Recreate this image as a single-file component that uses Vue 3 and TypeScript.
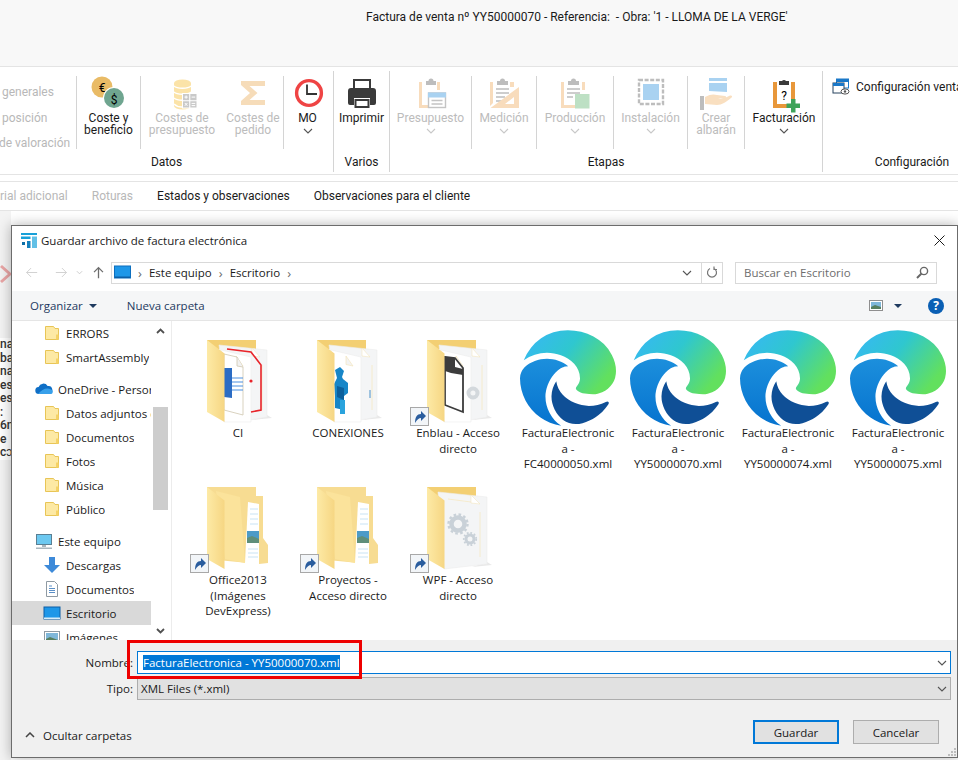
<script setup lang="ts">
interface Tool {
  icon: string;
  lines: string[];
  width: number;
  disabled?: boolean;
  menu?: boolean;
  sep?: boolean;
}

interface TreeRow {
  icon: string;
  label: string;
  indent?: boolean;
  gap?: boolean;
  selected?: boolean;
}

interface FileItem {
  icon: string;
  lines: string[];
  shortcut?: boolean;
}

const datosTools: Tool[] = [
  { icon: "i-coste", lines: ["Coste y", "beneficio"], width: 64, sep: true },
  { icon: "i-coins", lines: ["Costes de", "presupuesto"], width: 82, disabled: true },
  { icon: "i-sigma", lines: ["Costes de", "pedido"], width: 61, disabled: true, sep: true },
  { icon: "i-clock", lines: ["MO"], width: 47, menu: true },
];

const etapasTools: Tool[] = [
  { icon: "i-presupuesto", lines: ["Presupuesto"], width: 82, disabled: true, menu: true, sep: true },
  { icon: "i-medicion", lines: ["Medición"], width: 65, disabled: true, menu: true, sep: true },
  { icon: "i-produccion", lines: ["Producción"], width: 77, disabled: true, menu: true, sep: true },
  { icon: "i-instalacion", lines: ["Instalación"], width: 74, disabled: true, menu: true, sep: true },
  { icon: "i-albaran", lines: ["Crear", "albarán"], width: 57, disabled: true, sep: true },
  { icon: "i-facturacion", lines: ["Facturación"], width: 78, menu: true },
];

const tree: TreeRow[] = [
  { icon: "t-folder", label: "ERRORS", indent: true },
  { icon: "t-folder", label: "SmartAssembly", indent: true },
  { icon: "t-cloud", label: "OneDrive - Personal", gap: true },
  { icon: "t-folder", label: "Datos adjuntos de correo", indent: true },
  { icon: "t-folder", label: "Documentos", indent: true },
  { icon: "t-folder", label: "Fotos", indent: true },
  { icon: "t-folder", label: "Música", indent: true },
  { icon: "t-folder", label: "Público", indent: true },
  { icon: "t-pc", label: "Este equipo", gap: true },
  { icon: "t-down", label: "Descargas", indent: true },
  { icon: "t-doc", label: "Documentos", indent: true },
  { icon: "t-desktop", label: "Escritorio", indent: true, selected: true },
  { icon: "t-image", label: "Imágenes", indent: true },
];

const files: FileItem[] = [
  { icon: "f-ci", lines: ["CI"] },
  { icon: "f-con", lines: ["CONEXIONES"] },
  { icon: "f-enb", lines: ["Enblau - Acceso", "directo"], shortcut: true },
  { icon: "edge", lines: ["FacturaElectronic", "a -", "FC40000050.xml"] },
  { icon: "edge", lines: ["FacturaElectronic", "a -", "YY50000070.xml"] },
  { icon: "edge", lines: ["FacturaElectronic", "a -", "YY50000074.xml"] },
  { icon: "edge", lines: ["FacturaElectronic", "a -", "YY50000075.xml"] },
  { icon: "f-open", lines: ["Office2013", "(Imágenes", "DevExpress)"], shortcut: true },
  { icon: "f-open", lines: ["Proyectos -", "Acceso directo"], shortcut: true },
  { icon: "f-wpf", lines: ["WPF - Acceso", "directo"], shortcut: true },
];

const behindLines = ["na", "ba", "na", "es", "es:", ":", "6n", "e", "cɔ"];
</script>

<template>
  <div class="page">
    <svg class="sprite" aria-hidden="true">
      <defs>
        <linearGradient id="flap" x1="0" y1="0" x2="1" y2="0">
          <stop offset="0" stop-color="#fdeaa6" />
          <stop offset="1" stop-color="#f6d683" />
        </linearGradient>
        <linearGradient id="edgeTop" x1="0" y1="0" x2="1" y2="0.55">
          <stop offset="0" stop-color="#38b6f8" />
          <stop offset="0.5" stop-color="#2fc7cf" />
          <stop offset="1" stop-color="#62e05e" />
        </linearGradient>
        <linearGradient id="edgeMid" x1="0" y1="0" x2="0" y2="1">
          <stop offset="0" stop-color="#1c8fdc" />
          <stop offset="1" stop-color="#0673cf" />
        </linearGradient>

        <!-- ribbon icons, 40x40 -->
        <symbol id="i-coste" viewBox="0 0 40 40">
          <circle cx="13" cy="14" r="10.5" fill="#e9bb66" />
          <text x="13" y="19" class="svg-sign" text-anchor="middle">€</text>
          <circle cx="25" cy="25" r="11" fill="#fff" />
          <circle cx="25" cy="25" r="10" fill="#6fa590" />
          <text x="25" y="30.5" class="svg-sign svg-sign--big" text-anchor="middle">$</text>
        </symbol>
        <symbol id="i-coins" viewBox="0 0 40 40">
          <path d="M12 10a8.5 3.5 0 0 1 17 0v23a8.5 3.5 0 0 1-17 0z" fill="#fbe3a8" />
          <path d="M12 13c3 3 14 3 17 0M12 19c3 3 14 3 17 0M12 25c3 3 14 3 17 0M12 31c2 2 6 3 8 3" fill="none" stroke="#fff" stroke-width="1.4" />
          <rect x="20" y="20" width="15.5" height="15.5" fill="#fff" />
          <path d="M21 21h6.2v6.2H21zM28.3 21h6.2v6.2h-6.2zM21 28.3h6.2v6.2H21zM28.3 28.3h6.2v6.2h-6.2z" fill="#c9c9c9" />
          <path d="M24.1 22.5v3.2M22.5 24.1h3.2M29.6 24.1h3.6M22.8 30l2.6 2.8M25.4 30l-2.6 2.8M29.6 30.4h3.6M29.6 32.6h3.6" stroke="#fff" stroke-width="1" />
        </symbol>
        <symbol id="i-sigma" viewBox="0 0 40 40">
          <path d="M8 8h24v5H16.5l8 7-8 7H32v5H8v-4l9-8-9-8z" fill="#f6dcb9" />
        </symbol>
        <symbol id="i-clock" viewBox="0 0 40 40">
          <circle cx="21" cy="20" r="12.4" fill="#fff" stroke="#ef4444" stroke-width="3.4" />
          <path d="M19 11.5V21h10" fill="none" stroke="#333" stroke-width="1.8" />
        </symbol>
        <symbol id="i-print" viewBox="0 0 40 40">
          <path d="M12 15V7h16v8" fill="none" stroke="#3a3a3a" stroke-width="2" />
          <path d="M9 15h22a3 3 0 0 1 3 3v12a2 2 0 0 1-2 2h-4v-7H12v7H8a2 2 0 0 1-2-2V18a3 3 0 0 1 3-3z" fill="#3a3a3a" />
          <path d="M13.5 27h13v7h-13z" fill="none" stroke="#3a3a3a" stroke-width="2" />
        </symbol>
        <symbol id="i-presupuesto" viewBox="0 0 40 40">
          <path d="M8 9h3v26h14v-3H11M26 9h3v8h-3z" fill="#f8dcbc" />
          <path d="M8 9h3v26H8z" fill="#f8dcbc" />
          <path d="M15 8h2.5a2.5 2.5 0 0 1 5 0H25v4H15z" fill="#bdbdbd" />
          <rect x="17.5" y="20" width="17" height="14.5" fill="#fff" stroke="#c4c4c4" stroke-width="1.4" />
          <rect x="17" y="19.5" width="18" height="5" fill="#a9d2f1" />
          <path d="M20.5 27.5h11M20.5 31h11" stroke="#c4c4c4" stroke-width="1.4" />
        </symbol>
        <symbol id="i-medicion" viewBox="0 0 40 40">
          <path d="M6 9h3v21l-3 3zM26 9h4v5h-4z" fill="#f8dcbc" />
          <path d="M13 8h3a2.5 2.5 0 0 1 5 0h3v4H13z" fill="#bdbdbd" />
          <path d="M12 16h13M12 20h13M12 24h9M12 28h6" stroke="#bdbdbd" stroke-width="1.6" />
          <path d="M35 14v21H6.5zM30 24l-9 7h9z" fill="#f8dcbc" fill-rule="evenodd" />
        </symbol>
        <symbol id="i-produccion" viewBox="0 0 40 40">
          <path d="M6 9h3v26h11v-3H9M27 9h3v8h-3z" fill="#f8dcbc" />
          <path d="M6 9h3v26H6z" fill="#f8dcbc" />
          <path d="M13 8h3a2.5 2.5 0 0 1 5 0h3v4H13z" fill="#bdbdbd" />
          <path d="M12 16h13M12 20h13M12 24h6" stroke="#bdbdbd" stroke-width="1.6" />
          <rect x="20" y="21" width="14.5" height="14.5" fill="#bde0c4" />
        </symbol>
        <symbol id="i-instalacion" viewBox="0 0 40 40">
          <rect x="8" y="7" width="24" height="24" fill="none" stroke="#bdbdbd" stroke-width="2.4" stroke-dasharray="4 1.6" />
          <rect x="12" y="11" width="16" height="16" fill="#a9d2f1" />
        </symbol>
        <symbol id="i-albaran" viewBox="0 0 40 40">
          <path d="M13 5h18v3H13zM13 10h18v9l-18-1z" fill="#a9d2f1" />
          <path d="M4 23h4v14H4z" fill="#bdbdbd" />
          <path d="M9 24c5-3 9-3 12-2l8 1c2 .5 1 2.500-1 2.500h-6c3 1 6 0 12-3 2-.5 3 1 1 2.500-5 4-9 7-14 7-4 0-8-1-12-1z" fill="#f9dfc0" />
        </symbol>
        <symbol id="i-facturacion" viewBox="0 0 40 40">
          <path d="M9 9h4v22h13v4H9zM27 9h4v18h-4z" fill="#e8973a" />
          <path d="M15 8h3a2.500 2.500 0 0 1 4 0h3v4H15z" fill="#3a3a3a" />
          <text x="20" y="27" class="svg-q" text-anchor="middle">?</text>
          <path d="M27 26h4.500v4.500H36V35h-4.500v4.500H27V35h-4.500v-4.500H27z" fill="#3fa35a" />
        </symbol>

        <!-- big folder parts, 96x96 -->
        <symbol id="folder-back" viewBox="0 0 96 96">
          <path d="M17 10h49v9H17z" fill="#f3cf73" />
          <path d="M62 90l20-2-5-3z" fill="#e9e9e9" />
        </symbol>
        <symbol id="folder-flap" viewBox="0 0 96 96">
          <path d="M17 10l17.500 13.500V92L17 82z" fill="url(#flap)" />
        </symbol>
        <symbol id="pages" viewBox="0 0 96 96">
          <path d="M29 15l48 5v67l-17 3-21-8z" fill="#f4f5f6" stroke="#ececec" stroke-width=".6" />
          <path d="M62 18l8 9-8-1z" fill="#fff" stroke="#f3e3b5" stroke-width=".5" />
          <path d="M72 35v45" stroke="#f6e9c4" stroke-width=".8" />
          <path d="M31 20l30 7v65H34z" fill="#fff" stroke="#ececec" stroke-width=".6" />
          <path d="M46 26l7 10-7-1.500z" fill="#f3f3f3" stroke="#f3e3b5" stroke-width=".6" />
        </symbol>

        <symbol id="f-ci" viewBox="0 0 96 96">
          <use href="#folder-back" width="96" height="96" />
          <use href="#pages" width="96" height="96" />
          <path d="M37 19l24 3 10 13v45l-10 2" fill="none" stroke="#e8242a" stroke-width="1.600" />
          <circle cx="61" cy="51" r="1.600" fill="#e8242a" />
          <path d="M34 24l13 3 6 10v48l-19-5z" fill="#fff" stroke="#cfc6ae" stroke-width=".8" />
          <path d="M47 27v9l6 1" fill="#f1f1f1" stroke="#cfc6ae" stroke-width=".8" />
          <path d="M34 38h8v30l-8-1z" fill="#2b6cc4" />
          <path d="M42 48h11M42 52h11M42 56h11M42 60h11" stroke="#4a90e2" stroke-width="1.200" />
          <use href="#folder-flap" width="96" height="96" />
        </symbol>
        <symbol id="f-con" viewBox="0 0 96 96">
          <use href="#folder-back" width="96" height="96" />
          <use href="#pages" width="96" height="96" />
          <path d="M70 60v8" stroke="#4a90c8" stroke-width="1" />
          <path d="M35 40l5-3 4 4-2 6 1 2 5 4v10l-4 3v14l-9-2V66l-1-12 3-6z" fill="#1786c8" />
          <path d="M37 56l7 2v12l-7-3z" fill="#0b5f9c" />
          <path d="M40 70h5v14h-5z" fill="#2aa3dd" />
          <use href="#folder-flap" width="96" height="96" />
        </symbol>
        <symbol id="f-enb" viewBox="0 0 96 96">
          <use href="#folder-back" width="96" height="96" />
          <use href="#pages" width="96" height="96" />
          <path d="M35 27l10 1 8 10v44l-18-7z" fill="#fff" stroke="#3c3c3c" stroke-width="1.800" />
          <path d="M35 27l10 1v9l8 2v6l-12-2-6-2z" fill="#3c3c3c" />
          <circle cx="63" cy="63" r="4.500" fill="none" stroke="#d3d8dc" stroke-width="4" />
          <use href="#folder-flap" width="96" height="96" />
        </symbol>
        <symbol id="f-open" viewBox="0 0 96 96">
          <path d="M17 10h49v9l7 0v42l5 7v18l-9 1-52-5z" fill="#f7dc92" />
          <path d="M58 25l11 2v62l-14-3z" fill="#fff" />
          <path d="M60 32h8M60 37h8M60 42h8M60 47h8M58 72h10M58 76h10M58 80h10" stroke="#bcdcf0" stroke-width=".8" />
          <path d="M57 54h12v12H57z" fill="#4c9bc8" />
          <path d="M57 61l5-2 7 3v4H57z" fill="#5f8f7a" />
          <path d="M26 14l24 6 5 66-20-4z" fill="#fbe39b" />
          <use href="#folder-flap" width="96" height="96" />
        </symbol>
        <symbol id="f-wpf" viewBox="0 0 96 96">
          <use href="#folder-back" width="96" height="96" />
          <path d="M28 15l49 5v67l-43 5z" fill="#f4f5f6" stroke="#ececec" stroke-width=".6" />
          <path d="M61 18l9 9-9-1z" fill="#fff" stroke="#f3e3b5" stroke-width=".5" />
          <path d="M38 22l23 3M70 35v45" stroke="#f6e9c4" stroke-width=".8" />
          <circle cx="48" cy="47" r="6.500" fill="none" stroke="#c9d1d8" stroke-width="4.500" />
          <circle cx="48" cy="47" r="9.500" fill="none" stroke="#c9d1d8" stroke-width="2.400" stroke-dasharray="2.600 2.400" />
          <circle cx="60" cy="62" r="4" fill="none" stroke="#c9d1d8" stroke-width="3" />
          <circle cx="60" cy="62" r="6.200" fill="none" stroke="#c9d1d8" stroke-width="1.800" stroke-dasharray="1.800 1.800" />
          <use href="#folder-flap" width="96" height="96" />
        </symbol>

        <symbol id="edge" viewBox="0 0 24 24">
          <path d="M6.360 16.590q0 1.100.27 2.150.27 1.060.78 2.030.51.960 1.240 1.770.74.820 1.660 1.400-1.470-.2-2.800-.74-1.330-.55-2.480-1.370-1.150-.83-2.080-1.900-.92-1.070-1.580-2.330T.36 14.940Q0 13.540 0 12.060q0-.81.32-1.490.31-.68.83-1.230.53-.55 1.200-.96.66-.4 1.350-.66.74-.27 1.500-.39.78-.12 1.550-.12.7 0 1.420.1.72.12 1.400.35.680.23 1.320.57.630.35 1.160.83-.35 0-.7.07-.33.07-.65.23v-.02q-.63.280-1.200.74-.57.460-1.050 1.040-.48.580-.87 1.260-.38.670-.65 1.390-.27.710-.42 1.440-.15.720-.15 1.380z" fill="url(#edgeMid)" />
          <path d="M21.860 17.860q.14 0 .25.120.1.130.1.250t-.11.330l-.32.460-.43.530-.44.5q-.21.25-.38.42l-.22.23q-.58.53-1.340 1.040-.76.510-1.600.91-.86.4-1.740.64t-1.670.24q-.9 0-1.690-.28-.8-.28-1.480-.78-.68-.5-1.220-1.170-.53-.66-.92-1.440-.38-.77-.58-1.600-.2-.83-.2-1.670 0-1 .32-1.960.33-.97.87-1.800.14.950.55 1.770.41.820 1.020 1.500.6.680 1.380 1.210.78.540 1.640.9.860.36 1.770.56.920.2 1.800.2 1.120 0 2.180-.24 1.060-.23 2.060-.72l.2-.1.2-.05z" fill="#0f4f96" />
          <path d="M11.960.06q1.700 0 3.330.39 1.630.38 3.070 1.150 1.430.77 2.620 1.930 1.180 1.160 1.980 2.700.49.940.76 1.960.28 1 .28 2.080 0 .89-.23 1.700-.24.8-.69 1.480-.45.68-1.100 1.220-.64.53-1.450.88-.54.24-1.110.36-.58.13-1.160.13-.42 0-.97-.03-.54-.03-1.100-.12-.55-.09-1.050-.28-.5-.19-.84-.5-.12-.09-.23-.24-.1-.16-.1-.33 0-.15.16-.35.16-.2.35-.5.2-.28.36-.68.16-.4.16-.95 0-1.060-.4-1.960-.4-.91-1.060-1.640-.66-.74-1.520-1.280-.86-.55-1.790-.89-.84-.3-1.720-.44-.87-.14-1.760-.14-1.550 0-3.060.45T.94 7.550q.71-1.740 1.810-3.130 1.100-1.380 2.520-2.350Q6.680 1.100 8.370.58q1.700-.52 3.580-.52Z" fill="url(#edgeTop)" />
        </symbol>

        <!-- navigation tree icons, 18x18 -->
        <symbol id="t-folder" viewBox="0 0 18 18">
          <path d="M2.500 2.500h8l1.500 2h3.500v11H2.500z" fill="#fde9a4" stroke="#e8c556" />
          <path d="M13 10.500h2.500v5H13z" fill="#f5d266" />
        </symbol>
        <symbol id="t-cloud" viewBox="0 0 18 18">
          <path d="M4 14a3.500 3.500 0 0 1-.4-7A5 5 0 0 1 12.600 6a3.800 3.800 0 0 1 1.400 8z" fill="#0f6fc6" />
          <path d="M3 14h12a2.300 2.300 0 0 0 1-4.500C12 7 7 9 3 14z" fill="#38a0ea" />
        </symbol>
        <symbol id="t-pc" viewBox="0 0 18 18">
          <rect x="1.500" y="2.500" width="15" height="10" fill="#6cc8f0" stroke="#5a7f93" />
          <path d="M7 13h4v2H7zM1 15.500h16V17H1z" fill="#a9b6bd" />
        </symbol>
        <symbol id="t-down" viewBox="0 0 18 18">
          <path d="M6 1h6v8h5l-8 8-8-8h5z" fill="#3d8ad9" />
        </symbol>
        <symbol id="t-doc" viewBox="0 0 18 18">
          <path d="M3.500 1.500h8l3 3v12h-11z" fill="#fff" stroke="#8f9aa3" />
          <path d="M6 6h3M6 8.500h6M6 10.500h6M6 12.500h6" stroke="#5b8fc7" />
        </symbol>
        <symbol id="t-desktop" viewBox="0 0 18 18">
          <rect x="1" y="3" width="16" height="12" fill="#1e97e8" stroke="#0d5fa6" />
          <path d="M1 13.500h16V15H1z" fill="#d8edf9" />
        </symbol>
        <symbol id="t-image" viewBox="0 0 18 18">
          <rect x="1.500" y="3.500" width="15" height="12" fill="#fff" stroke="#8f9aa3" />
          <path d="M3 5h12v8H3z" fill="#7fb7d9" />
          <path d="M3 11l4-2 8 3v1H3z" fill="#577f5f" />
        </symbol>
      </defs>
    </svg>

    <header class="top-bar">Factura de venta nº YY50000070 - Referencia:&nbsp; - Obra: '1 - LLOMA DE LA VERGE'</header>

    <section class="ribbon">
      <div class="group group--datos">
        <div class="group-row">
          <ul class="mini-list">
            <li>generales</li>
            <li>posición</li>
            <li class="mini-list__cut">de valoración</li>
          </ul>
          <div
            v-for="tool in datosTools"
            :key="tool.icon"
            class="tool"
            :class="{ 'tool--off': tool.disabled, 'tool--sep': tool.sep }"
            :style="{ width: tool.width + 'px' }"
          >
            <svg class="tool-icon"><use :href="'#' + tool.icon" width="40" height="40" /></svg>
            <span v-for="line in tool.lines" :key="line" class="tool-line">{{ line }}</span>
            <svg v-if="tool.menu" class="chevron" viewBox="0 0 10 6"><path d="M1 1l4 4 4-4" /></svg>
          </div>
        </div>
        <div class="group-name">Datos</div>
      </div>

      <div class="group group--varios">
        <div class="group-row">
          <div class="tool tool--print">
            <svg class="tool-icon"><use href="#i-print" width="40" height="40" /></svg>
            <span class="tool-line">Imprimir</span>
          </div>
        </div>
        <div class="group-name">Varios</div>
      </div>

      <div class="group group--etapas">
        <div class="group-row">
          <div
            v-for="tool in etapasTools"
            :key="tool.icon"
            class="tool"
            :class="{ 'tool--off': tool.disabled, 'tool--sep': tool.sep }"
            :style="{ width: tool.width + 'px' }"
          >
            <svg class="tool-icon"><use :href="'#' + tool.icon" width="40" height="40" /></svg>
            <span v-for="line in tool.lines" :key="line" class="tool-line">{{ line }}</span>
            <svg v-if="tool.menu" class="chevron" viewBox="0 0 10 6"><path d="M1 1l4 4 4-4" /></svg>
          </div>
        </div>
        <div class="group-name">Etapas</div>
      </div>

      <div class="group group--config">
        <div class="group-row">
          <div class="config-link">
            <svg width="18" height="18" viewBox="0 0 18 18">
              <rect x="4.500" y="1" width="12" height="9" fill="#fff" stroke="#1a78c8" />
              <path d="M4.500 1h12v3h-12z" fill="#1a78c8" />
              <rect x="1" y="5" width="11" height="10" fill="#fff" stroke="#27435f" />
              <path d="M1 5h11v3H1z" fill="#1a78c8" />
              <ellipse cx="13" cy="13.500" rx="4" ry="2.600" fill="#fff" stroke="#555" />
              <circle cx="13" cy="13.500" r="1.200" fill="#555" />
            </svg>
            <span>Configuración ventas</span>
          </div>
        </div>
        <div class="group-name">Configuración</div>
      </div>
    </section>

    <nav class="tabs">
      <span class="tab tab--off">rial adicional</span>
      <span class="tab tab--off">Roturas</span>
      <span class="tab">Estados y observaciones</span>
      <span class="tab">Observaciones para el cliente</span>
    </nav>

    <div class="behind">
      <svg class="behind-x" width="12" height="20" viewBox="0 0 12 20"><path d="M1 2l9 8-9 8" fill="none" stroke="#e9a5a5" stroke-width="3" /></svg>
      <div class="behind-text">
        <div v-for="(line, i) in behindLines" :key="i">{{ line }}</div>
      </div>
    </div>

    <div class="dialog">
      <div class="title-bar">
        <svg width="18" height="18" viewBox="0 0 18 18">
          <path d="M1 2h16v2H1z" fill="#17a0d8" />
          <path d="M12 5.500h5V17h-5z" fill="#62c0e6" />
          <path d="M1 5.500h9.500V8H1z" fill="#17a0d8" />
          <path d="M7 10h3.500v7H7z" fill="#1580bd" />
          <path d="M2 11h3v3H2z" fill="#0d6fa8" />
        </svg>
        <span class="title-text">Guardar archivo de factura electrónica</span>
        <svg class="close" width="11" height="11" viewBox="0 0 11 11"><path d="M.5.5l10 10M10.500.5l-10 10" stroke="#1a1a1a" /></svg>
      </div>

      <div class="nav-row">
        <svg class="nav-arrow" viewBox="0 0 16 14"><path d="M15 7H2M7.500 1.500L2 7l5.500 5.500" stroke="#c7c7c7" /></svg>
        <svg class="nav-arrow nav-arrow--fwd" viewBox="0 0 16 14"><path d="M1 7h13M8.500 1.500L14 7l-5.500 5.500" stroke="#c7c7c7" /></svg>
        <svg class="nav-drop" viewBox="0 0 8 5"><path d="M1 1l3 3 3-3" stroke="#c7c7c7" /></svg>
        <svg class="nav-arrow nav-arrow--up" viewBox="0 0 14 16"><path d="M7 15V2M1.500 7.500L7 2l5.500 5.500" stroke="#6d6d6d" stroke-width="1.600" /></svg>
        <div class="address">
          <svg class="address-pc" width="17" height="15" viewBox="0 0 17 15">
            <rect x=".5" y="1" width="16" height="12" fill="#1e97e8" stroke="#0d6fbe" />
            <path d="M1 11.500h15V13H1z" fill="#0d5fa6" />
          </svg>
          <span class="crumb-sep">›</span>
          <span>Este equipo</span>
          <span class="crumb-sep">›</span>
          <span>Escritorio</span>
          <span class="crumb-sep">›</span>
          <svg class="address-drop" viewBox="0 0 10 6"><path d="M1 1l4 4 4-4" /></svg>
          <div class="address-refresh">
            <svg width="12" height="13" viewBox="0 0 12 13"><path d="M4 2.500a4.500 4.500 0 1 0 4 0M8 .5v3H11" fill="none" stroke="#777" stroke-width="1.200" /></svg>
          </div>
        </div>
        <div class="search">
          <span>Buscar en Escritorio</span>
          <svg width="13" height="13" viewBox="0 0 13 13"><circle cx="8" cy="5" r="3.600" fill="none" stroke="#666" stroke-width="1.400" /><path d="M5.500 7.500L1 12" stroke="#666" stroke-width="2" /></svg>
        </div>
      </div>

      <div class="tool-row">
        <span class="cmd">Organizar <i class="caret"></i></span>
        <span class="cmd cmd--new">Nueva carpeta</span>
        <span class="tool-row__end">
          <svg width="14" height="11" viewBox="0 0 14 11">
            <rect x=".5" y=".5" width="13" height="10" fill="#fff" stroke="#8f8f8f" />
            <path d="M2 2h10v7H2z" fill="#7fb7d9" />
            <path d="M2 7l4-2 6 2v2H2z" fill="#577f5f" />
          </svg>
          <i class="caret caret--dark"></i>
          <span class="help">?</span>
        </span>
      </div>

      <div class="main">
        <aside class="side">
          <div class="tree">
            <div
              v-for="row in tree"
              :key="row.icon + row.label"
              class="tree-row"
              :class="{ 'tree-row--indent': row.indent, 'tree-row--gap': row.gap, 'tree-row--on': row.selected }"
            >
              <svg class="tree-icon"><use :href="'#' + row.icon" width="18" height="18" /></svg>
              <span class="tree-label">{{ row.label }}</span>
            </div>
          </div>
          <div class="scrollbar">
            <svg class="scroll-arrow" viewBox="0 0 9 6"><path d="M1 5l3.500-3.500L8 5" /></svg>
            <div class="scroll-thumb"></div>
            <svg class="scroll-arrow scroll-arrow--end" viewBox="0 0 9 6"><path d="M1 1l3.500 3.500L8 1" /></svg>
          </div>
        </aside>

        <div class="files">
          <div v-for="(file, i) in files" :key="i" class="file">
            <div class="file-icon">
              <svg width="96" height="96"><use :href="'#' + file.icon" width="96" height="96" /></svg>
              <span v-if="file.shortcut" class="shortcut">
                <svg width="17" height="17" viewBox="0 0 17 17"><path d="M4 15c0-6 2-9 6-9V3l5 5-5 5v-3c-2 0-4 1.500-6 5z" fill="#2a5d9e" /></svg>
              </span>
            </div>
            <div v-for="line in file.lines" :key="line" class="file-line">{{ line }}</div>
          </div>
        </div>
      </div>

      <footer class="footer">
        <div class="form">
          <label class="form-label">Nombre:</label>
          <div class="field field--active">
            <span class="selected-text">FacturaElectronica - YY50000070.xml</span>
            <svg class="field-drop" viewBox="0 0 10 6"><path d="M1 1l4 4 4-4" /></svg>
          </div>
          <label class="form-label">Tipo:</label>
          <div class="field field--select">
            <span>XML Files (*.xml)</span>
            <svg class="field-drop" viewBox="0 0 10 6"><path d="M1 1l4 4 4-4" /></svg>
          </div>
        </div>
        <div class="footer-bottom">
          <span class="hide-folders">
            <svg width="10" height="6" viewBox="0 0 10 6"><path d="M1 5l4-4 4 4" fill="none" stroke="#444" stroke-width="1.500" /></svg>
            Ocultar carpetas
          </span>
          <button class="btn btn--primary">Guardar</button>
          <button class="btn">Cancelar</button>
        </div>
        <svg class="grip" width="9" height="9" viewBox="0 0 9 9"><path d="M6 0h2v2H6zM3 3h2v2H3zM6 3h2v2H6zM0 6h2v2H0zM3 6h2v2H3zM6 6h2v2H6z" fill="#bdbdbd" /></svg>
      </footer>

      <div class="callout"></div>
    </div>
  </div>
</template>

<style>
html,
body {
  margin: 0;
  background: #fff;
}
</style>

<style scoped>
.page {
  position: relative;
  width: 958px;
  height: 760px;
  overflow: hidden;
  background: #fff;
  font-family: Roboto, "Liberation Sans", sans-serif;
  font-size: 12px;
  color: #1a1a1a;
}

.sprite {
  position: absolute;
  width: 0;
  height: 0;
}

.top-bar {
  height: 66px;
  box-sizing: border-box;
  padding: 10px 0 0 366px;
  background: #f8f8f8;
  line-height: 14px;
  white-space: nowrap;
}

.ribbon {
  display: flex;
  height: 109px;
  box-sizing: border-box;
  padding-top: 4px;
  background: #fff;
  border-top: 1px solid #e4e4e4;
  border-bottom: 1px solid #e4e4e4;
}

.group {
  display: flex;
  flex-direction: column;
  flex: none;
  height: 101px;
  box-sizing: border-box;
  border-right: 1px solid #d4d4d4;
}

.group--datos {
  width: 334px;
}

.group--varios {
  width: 56px;
}

.group--etapas {
  width: 433px;
}

.group--config {
  width: 200px;
  border-right: 0;
}

.group-row {
  display: flex;
  height: 73px;
  margin-top: 5px;
}

.group-name {
  margin-top: 5px;
  line-height: 16px;
  text-align: center;
}

.group--config .group-name {
  padding-right: 22px;
  text-align: center;
  width: 178px;
}

.mini-list {
  flex: none;
  width: 77px;
  height: 73px;
  box-sizing: border-box;
  margin: 0;
  padding: 4px 0 0 2px;
  list-style: none;
  border-right: 1px solid #d4d4d4;
  color: #b8b8b8;
  line-height: 25.500px;
  white-space: nowrap;
}

.mini-list__cut {
  margin-left: -3px;
}

.tool {
  display: flex;
  flex-direction: column;
  align-items: center;
  flex: none;
  box-sizing: border-box;
  height: 73px;
  line-height: 12px;
  white-space: nowrap;
}

.tool--sep {
  border-right: 1px solid #d4d4d4;
}

.tool--off {
  color: #bcbcbc;
}

.tool--print {
  width: 55px;
}

.tool-icon {
  flex: none;
  width: 40px;
  height: 40px;
  margin: -3px 0 -1px;
}

.tool-line {
  display: block;
}

.chevron {
  width: 10px;
  height: 6px;
  margin-top: 4px;
}

.chevron path,
.field-drop path,
.address-drop path {
  fill: none;
  stroke: #555;
  stroke-width: 1.100;
}

.tool--off .chevron path {
  stroke: #c8c8c8;
}

.config-link {
  display: flex;
  align-items: center;
  gap: 6px;
  height: 18px;
  margin: 2px 0 0 9px;
  white-space: nowrap;
}

.tabs {
  display: flex;
  gap: 24px;
  align-items: center;
  height: 30px;
  box-sizing: border-box;
  margin-top: 6px;
  border-top: 1px solid #e4e4e4;
  border-bottom: 1px solid #e4e4e4;
  line-height: 14px;
}

.tab--off {
  color: #b8b8b8;
}

.behind {
  width: 11px;
  height: 550px;
  overflow: hidden;
  background: #f3f3f3;
}

.behind-x {
  display: block;
  margin-top: 53px;
}

.behind-text {
  margin-top: 54px;
  padding-top: 0;
  background: #fff;
  font-weight: 500;
  line-height: 13.500px;
  color: #333;
  white-space: nowrap;
}

.dialog {
  position: absolute;
  left: 11px;
  top: 225px;
  display: flex;
  flex-direction: column;
  width: 947px;
  height: 533px;
  box-sizing: border-box;
  border: 1px solid #6c6c6c;
  background: #fff;
  box-shadow: 0 0 12px rgba(0, 0, 0, 0.3);
  font-family: "Open Sans", "Noto Sans", sans-serif;
  font-size: 11.500px;
}

.title-bar {
  display: flex;
  align-items: center;
  gap: 3px;
  height: 28px;
  flex: none;
  padding: 0 12px 0 8px;
}

.title-text {
  flex: 1;
}

.nav-row {
  position: relative;
  display: flex;
  align-items: center;
  height: 37px;
  flex: none;
  padding-left: 13px;
}

.nav-arrow {
  width: 13px;
  height: 13px;
  fill: none;
  flex: none;
}

.nav-arrow--fwd {
  margin-left: 17px;
}

.nav-arrow--up {
  margin-left: 9px;
}

.nav-drop {
  flex: none;
  width: 7px;
  height: 5px;
  margin-left: 8px;
  fill: none;
}

.address {
  display: flex;
  align-items: center;
  flex: none;
  gap: 5px;
  width: 612px;
  height: 22px;
  box-sizing: border-box;
  margin-left: 6px;
  padding-left: 2px;
  border: 1px solid #d9d9d9;
}

.address-pc {
  flex: none;
}

.crumb-sep {
  padding: 0 2px;
  color: #6d6d6d;
  font-size: 13px;
  line-height: 14px;
}

.address-drop {
  width: 10px;
  height: 6px;
  margin-left: auto;
}

.address-refresh {
  display: flex;
  align-items: center;
  justify-content: center;
  width: 20px;
  height: 100%;
  margin-left: 4px;
  border-left: 1px solid #d9d9d9;
}

.search {
  display: flex;
  align-items: center;
  justify-content: space-between;
  flex: none;
  width: 202px;
  height: 22px;
  box-sizing: border-box;
  margin-left: 12px;
  padding: 0 7px 0 8px;
  border: 1px solid #d9d9d9;
  color: #6d6d6d;
}

.tool-row {
  display: flex;
  align-items: center;
  flex: none;
  height: 30px;
  box-sizing: border-box;
  padding-left: 18px;
  background: #f5f6f7;
  border-bottom: 1px solid #e5e5e5;
  color: #1e3a5f;
}

.cmd {
  display: inline-flex;
  align-items: center;
  gap: 6px;
}

.cmd--new {
  margin-left: 30px;
}

.caret {
  display: inline-block;
  border-left: 4px solid transparent;
  border-right: 4px solid transparent;
  border-top: 4px solid #1e3a5f;
}

.tool-row__end {
  display: flex;
  align-items: center;
  gap: 11px;
  margin-left: auto;
  padding-right: 13px;
}

.help {
  width: 16px;
  height: 16px;
  margin-left: 15px;
  border-radius: 50%;
  background: #0a5fb4;
  color: #fff;
  font-size: 12px;
  font-weight: 700;
  line-height: 16px;
  text-align: center;
}

.main {
  display: flex;
  flex: none;
  height: 319px;
  overflow: hidden;
}

.side {
  display: flex;
  flex: none;
  width: 159px;
  border-right: 1px solid #ececec;
}

.tree {
  flex: none;
  width: 139px;
  padding-top: 0;
  overflow: hidden;
}

.tree-row {
  display: flex;
  align-items: center;
  gap: 5px;
  height: 24px;
  padding-left: 23px;
  white-space: nowrap;
  overflow: hidden;
}

.tree-row--indent {
  padding-left: 31px;
}

.tree-row--gap {
  margin-top: 8px;
}

.tree-row--on {
  background: #d9d9d9;
}

.tree-icon {
  flex: none;
  width: 18px;
  height: 18px;
}

.tree-label {
  overflow: hidden;
}

.scrollbar {
  position: relative;
  flex: none;
  display: flex;
  flex-direction: column;
  align-items: center;
  width: 16px;
  margin-left: 1px;
}

.scroll-arrow {
  flex: none;
  width: 9px;
  height: 6px;
  margin-top: 7px;
  fill: none;
  stroke: #505050;
  stroke-width: 1.800;
}

.scroll-thumb {
  flex: none;
  width: 15px;
  height: 103px;
  margin-top: 73px;
  background: #cdcdcd;
}

.scroll-arrow--end {
  margin-top: 118px;
}

.files {
  display: grid;
  grid-template-columns: repeat(7, 110px);
  grid-auto-rows: 147px;
  flex: none;
  padding: 9px 0 0 11px;
}

.file {
  display: flex;
  flex-direction: column;
  align-items: center;
  min-width: 0;
  line-height: 15.500px;
  white-space: nowrap;
}

.file-icon {
  position: relative;
  width: 96px;
  height: 96px;
  margin-bottom: -1px;
}

.file-icon > svg {
  display: block;
}

.shortcut {
  position: absolute;
  left: 0;
  top: 77px;
  width: 19px;
  height: 19px;
  box-sizing: border-box;
  border: 1px solid #a8a8a8;
  background: #f2f5f8;
}

.shortcut svg {
  display: block;
  margin: 0;
}

.footer {
  position: relative;
  display: flex;
  flex-direction: column;
  flex: 1;
  padding-top: 11px;
  background: #f0f0f0;
}

.form {
  display: grid;
  grid-template-columns: 121px 814px;
  grid-template-rows: 23px 23px;
  row-gap: 3px;
  column-gap: 4px;
}

.form-label {
  align-self: center;
  text-align: right;
}

.field {
  position: relative;
  display: flex;
  align-items: center;
  box-sizing: border-box;
  padding-left: 5px;
  border: 1px solid #adadad;
}

.field--active {
  background: #fff;
  border-color: #0078d7;
}

.field--select {
  padding-left: 3px;
  background: #e1e1e1;
}

.selected-text {
  background: #0078d7;
  color: #fff;
  line-height: 15px;
  white-space: nowrap;
}

.field-drop {
  position: absolute;
  right: 3px;
  top: 8px;
  width: 10px;
  height: 6px;
}

.footer-bottom {
  display: flex;
  align-items: center;
  margin-top: 20px;
  padding: 0 18px 0 13px;
}

.hide-folders {
  display: flex;
  align-items: center;
  gap: 8px;
  margin: 6px auto 0 0;
}

.btn {
  width: 86px;
  height: 24px;
  box-sizing: border-box;
  margin-left: 14px;
  padding: 0;
  border: 1px solid #adadad;
  background: #e1e1e1;
  color: #1a1a1a;
  font: inherit;
}

.btn--primary {
  border: 2px solid #0078d7;
}

.grip {
  position: absolute;
  right: 0;
  bottom: 0;
}

.callout {
  position: absolute;
  left: 115px;
  top: 414px;
  width: 235px;
  height: 39px;
  box-sizing: border-box;
  border: 3px solid #ee0000;
  pointer-events: none;
}
</style>
